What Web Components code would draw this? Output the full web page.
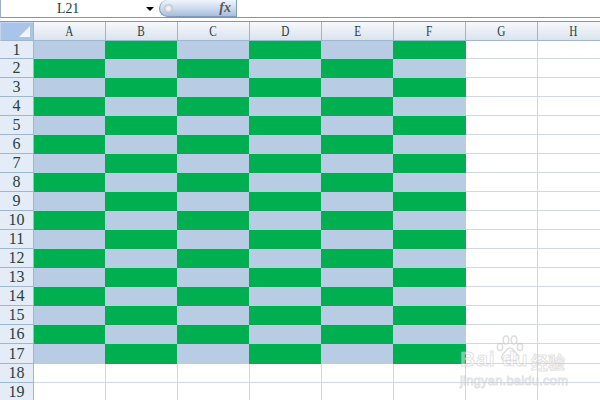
<!DOCTYPE html>
<html>
<head>
<meta charset="utf-8">
<style>
    html, body { margin: 0; padding: 0; height: 100%; overflow: hidden; background: #fff; }
</style>
</head>
<body>
<excel-app></excel-app>
<script>
class FormulaBar extends HTMLElement {
    constructor() {
        super();
        const shadow = this.attachShadow({ mode: 'open' });
        shadow.innerHTML = `
            <style>
                :host {
                    display: flex;
                    height: 18px;
                    box-sizing: border-box;
                    border-left: 1px solid #9db1c8;
                    border-bottom: 1px solid #7d98b5;
                    font: 15px "Liberation Serif", serif;
                    color: #1f3a3a;
                }
                .name { width: 143px; padding-left: 56px; box-sizing: border-box; line-height: 17px; }
                .name span { display: inline-block; transform: scaleX(.92); transform-origin: left; }
                .arrow { width: 0; height: 0; margin: 7px 0 0 2px; border: 4px solid transparent; border-top: 4px solid #000; border-bottom: 0; }
                .pill {
                    width: 78px; height: 17px; margin-left: 5px; box-sizing: border-box;
                    display: flex; align-items: center; justify-content: space-between;
                    border: 1px solid #7f9cc0; border-top: 0;
                    border-radius: 9px 0 0 9px;
                    background: linear-gradient(#f0f5fb, #cfdcee 50%, #a5bedf);
                    padding: 0 5px 0 4px;
                }
                .dot { width: 9px; height: 9px; border-radius: 50%; background: radial-gradient(#f4f4f4 20%, #9ea4ac); }
                .fx { font: italic bold 14px "Liberation Serif", serif; color: #5a5a5a; }
                .input { flex: 1; }
            </style>
            <div class="name"><span><slot name="cell"></slot></span></div>
            <div class="arrow"></div>
            <div class="pill"><span class="dot"></span><span class="fx">fx</span></div>
            <div class="input"></div>
        `;
    }
}

class HeadCell extends HTMLElement {
    constructor() {
        super();
        const shadow = this.attachShadow({ mode: 'open' });
        shadow.innerHTML = `
            <style>
                :host {
                    display: flex; align-items: center; justify-content: center;
                    box-sizing: border-box; overflow: hidden;
                    font: 15px "Liberation Serif", serif; color: #27413e;
                    border-bottom: 1px solid #9eb6ce;
                }
                :host([kind="col"]) { background: linear-gradient(#f6f8fb, #eaeff5 45%, #dbe3ed); }
                :host([kind="row"]) { background: #e4ecf7; font-size: 16px; border-right: 1px solid #9eb6ce; }
                :host([left]) { border-left: 1px solid #9eb6ce; }
                :host([right]) { border-right: 1px solid #9eb6ce; }
                span { display: inline-block; }
                :host([kind="col"]) span { transform: scaleX(.75); }
            </style>
            <span><slot></slot></span>
        `;
    }
}

class CornerCell extends HTMLElement {
    constructor() {
        super();
        const shadow = this.attachShadow({ mode: 'open' });
        shadow.innerHTML = `
            <style>
                :host {
                    display: block; position: relative; box-sizing: border-box;
                    background: #a9c4e9; border: 1px solid #c5d6ec; border-right-color: #9eb6ce; border-bottom-color: #9eb6ce;
                }
                svg { position: absolute; right: 3px; bottom: 3px; }
            </style>
            <svg width="11" height="11" viewBox="0 0 11 11"><polygon points="11,0 11,11 0,11" fill="#f2f5f9"/></svg>
        `;
    }
}

class SheetCell extends HTMLElement {
    constructor() {
        super();
        const shadow = this.attachShadow({ mode: 'open' });
        shadow.innerHTML = `
            <style>
                :host { display: block; box-sizing: border-box; background: #fff; border-bottom: 1px solid #d0d7e5; }
                :host([left]) { border-left: 1px solid #d0d7e5; }
                :host([right]) { border-right: 1px solid #d0d7e5; }
                :host([fill="blue"]) { background: #b8cce4; border-color: #b8cce4; }
                :host([fill="green"]) { background: #00b050; border-color: #00b050; }
            </style>
        `;
    }
}

class SheetGrid extends HTMLElement {
    constructor() {
        super();
        const shadow = this.attachShadow({ mode: 'open' });
        shadow.innerHTML = `
            <style>
                :host {
                    display: grid;
                    grid-template-columns: 34px 71px repeat(4, 72px) 73px 72px 72px;
                    grid-template-rows: 19px 18px repeat(15, 19px) 20px 19px 19px;
                    margin-top: 3px;
                    border-top: 1px solid #7d98b5;
                }
            </style>
        `;
        const names = ['A', 'B', 'C', 'D', 'E', 'F', 'G', 'H'];
        // B to F draw their line on the left, F to H on the right, as in the sheet
        const mark = (el, c) => {
            if (c >= 1 && c <= 5) el.setAttribute('left', '');
            if (c >= 5) el.setAttribute('right', '');
        };
        shadow.appendChild(document.createElement('corner-cell'));
        names.forEach((name, c) => {
            const head = document.createElement('head-cell');
            head.setAttribute('kind', 'col');
            mark(head, c);
            head.textContent = name;
            shadow.appendChild(head);
        });
        for (let r = 1; r <= 19; r++) {
            const head = document.createElement('head-cell');
            head.setAttribute('kind', 'row');
            head.textContent = r;
            shadow.appendChild(head);
            names.forEach((name, c) => {
                const cell = document.createElement('sheet-cell');
                mark(cell, c);
                if (r <= 17 && c < 6) {
                    cell.setAttribute('fill', (r + c) % 2 === 1 ? 'blue' : 'green');
                }
                shadow.appendChild(cell);
            });
        }
    }
}

class BaiduMark extends HTMLElement {
    constructor() {
        super();
        const shadow = this.attachShadow({ mode: 'open' });
        shadow.innerHTML = `
            <style>
                :host {
                    position: absolute; left: 459px; top: 334px; width: 110px; height: 52px;
                    color: rgba(255, 255, 255, 0.45); pointer-events: none;
                    -webkit-text-stroke: 1px rgba(190, 190, 190, 0.45);
                    font-family: "Liberation Sans", "Noto Sans CJK SC", sans-serif;
                }
                span { position: absolute; white-space: nowrap; }
                .bai { left: 1px; top: 13px; font-size: 21px; font-weight: bold; letter-spacing: 1px; }
                .du { left: 43px; top: 13px; font-size: 21px; font-weight: bold; }
                .cn { left: 72px; top: 15px; font-size: 17px; font-weight: bold; }
                .url { left: 1px; top: 39px; font-size: 13px; letter-spacing: .2px; }
                svg { position: absolute; left: 37px; top: 1px; }
            </style>
            <svg width="28" height="30" viewBox="0 0 28 30" fill="rgba(255,255,255,.45)" stroke="rgba(190,190,190,.5)" stroke-width="1.5">
                <ellipse cx="4" cy="12" rx="2.6" ry="3.6"/>
                <ellipse cx="10" cy="5" rx="2.8" ry="4"/>
                <ellipse cx="18" cy="5" rx="2.8" ry="4"/>
                <ellipse cx="24" cy="12" rx="2.6" ry="3.6"/>
                <path d="M14 13c-3 0-4 3-6 5-2 2-3 4-2 6 1 2 4 2 8 1 4 1 7 1 8-1 1-2 0-4-2-6-2-2-3-5-6-5z"/>
            </svg>
            <span class="bai">Bai</span>
            <span class="du">du</span>
            <span class="cn">经验</span>
            <span class="url">jingyan.baidu.com</span>
        `;
    }
}

class ExcelApp extends HTMLElement {
    constructor() {
        super();
        const shadow = this.attachShadow({ mode: 'open' });
        shadow.innerHTML = `
            <style>
                :host { display: block; position: relative; width: 600px; height: 400px; overflow: hidden; background: #fff; }
            </style>
            <formula-bar><span slot="cell">L21</span></formula-bar>
            <sheet-grid></sheet-grid>
            <baidu-mark></baidu-mark>
        `;
    }
}

customElements.define('formula-bar', FormulaBar);
customElements.define('head-cell', HeadCell);
customElements.define('corner-cell', CornerCell);
customElements.define('sheet-cell', SheetCell);
customElements.define('sheet-grid', SheetGrid);
customElements.define('baidu-mark', BaiduMark);
customElements.define('excel-app', ExcelApp);
</script>
</body>
</html>
